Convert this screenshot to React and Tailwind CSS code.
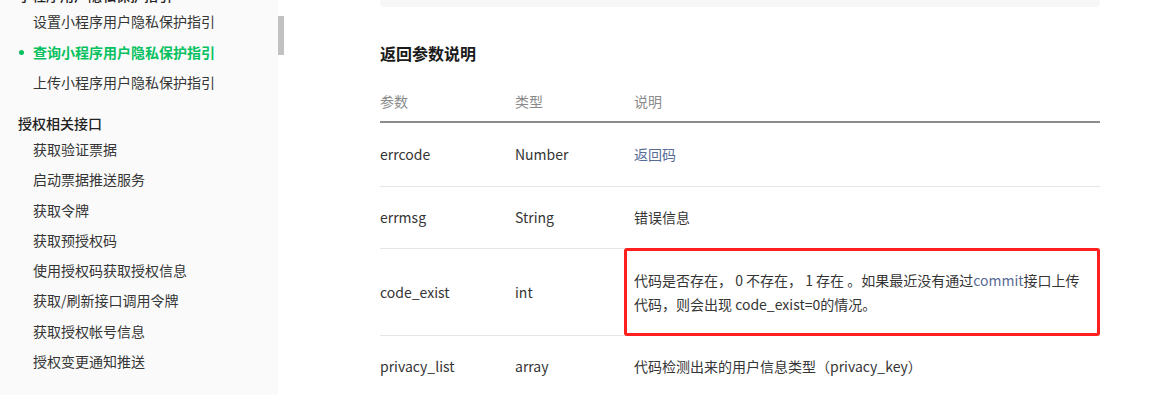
export default function App() {
  const items = [
    "获取验证票据",
    "启动票据推送服务",
    "获取令牌",
    "获取预授权码",
    "使用授权码获取授权信息",
    "获取/刷新接口调用令牌",
    "获取授权帐号信息",
    "授权变更通知推送",
  ];

  return (
    <div
      className="flex w-[1153px] h-[395px] overflow-hidden bg-white text-[14px] text-[#353535]"
      style={{ fontFamily: '"Noto Sans CJK SC", "Noto Sans", sans-serif' }}
    >
      {/* SIDEBAR */}
      <aside className="w-[278px] shrink-0 bg-[#fafafa]">
        <div className="-mt-[15px] pl-[18px] leading-[20px] font-medium text-[#222]">
          小程序用户隐私保护指引
        </div>
        <ul className="mt-[6px]">
          <li className="pl-[33px] leading-[20px]">设置小程序用户隐私保护指引</li>
          <li className="relative mt-[11px] pl-[33px] leading-[20px] font-bold text-[#07c160]">
            <span className="absolute left-[19px] top-[8px] w-[5px] h-[5px] rounded-full bg-[#07c160]" />
            查询小程序用户隐私保护指引
          </li>
          <li className="mt-[10px] pl-[33px] leading-[20px]">上传小程序用户隐私保护指引</li>
        </ul>
        <div className="mt-[21px] pl-[18px] leading-[20px] font-medium text-[#222]">授权相关接口</div>
        <ul className="mt-[6px] flex flex-col gap-[10.3px]">
          {items.map((t) => (
            <li key={t} className="pl-[33px] leading-[20px]">
              {t}
            </li>
          ))}
        </ul>
      </aside>

      {/* SCROLLBAR */}
      <div className="w-[6px] shrink-0">
        <div className="mt-[16px] h-[39px] bg-[#c1c1c1]" />
      </div>

      {/* MAIN */}
      <main className="w-[816px] pl-[96px]">
        <div className="h-[7px] bg-[#f7f7f7] rounded-b-[4px]" />

        <h2 className="mt-[34px] text-[16px] leading-[24px] font-bold text-[#1a1a1a]">返回参数说明</h2>

        <div className="mt-[17px]">
          <div className="flex items-center h-[41px] border-b-2 border-[#8c8c8c] text-[#8a8a8a]">
            <div className="w-[135px]">参数</div>
            <div className="w-[119px]">类型</div>
            <div className="flex-1">说明</div>
          </div>

          <div className="flex items-center h-[64px] border-b border-[#e5e5e5]">
            <div className="w-[135px]">errcode</div>
            <div className="w-[119px]">Number</div>
            <div className="flex-1 text-[#576b95]">返回码</div>
          </div>

          <div className="flex items-center h-[62px] border-b border-[#e5e5e5]">
            <div className="w-[135px]">errmsg</div>
            <div className="w-[119px]">String</div>
            <div className="flex-1">错误信息</div>
          </div>

          <div className="flex items-center h-[87px] border-b border-[#e5e5e5]">
            <div className="w-[135px]">code_exist</div>
            <div className="w-[119px]">int</div>
            <div className="relative flex-1 self-stretch flex items-center">
              <div className="absolute -left-[10px] -top-[1px] -bottom-[1px] right-0 border-[3px] border-[#ff1f1f] rounded-[3px]" />
              <p className="leading-[24px]">
                代码是否存在， 0 不存在， 1 存在 。如果最近没有通过
                <span className="text-[#576b95]">commit</span>
                接口上传
                <br />
                代码，则会出现 code_exist=0的情况。
              </p>
            </div>
          </div>

          <div className="flex items-center h-[60px]">
            <div className="w-[135px]">privacy_list</div>
            <div className="w-[119px]">array</div>
            <div className="flex-1">代码检测出来的用户信息类型（privacy_key）</div>
          </div>
        </div>
      </main>
    </div>
  );
}
